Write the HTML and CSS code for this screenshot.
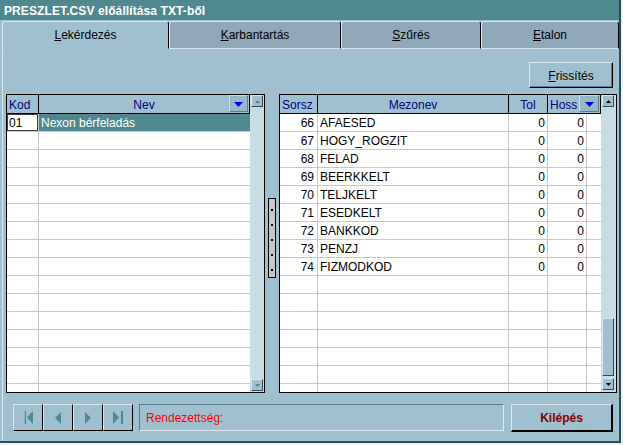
FILE: index.html
```html
<!DOCTYPE html>
<html>
<head>
<meta charset="utf-8">
<title>PRESZLET.CSV előállítása TXT-ből</title>
<link rel="stylesheet" href="styles.css">
</head>
<body>
<div class="window">
  <div class="titlebar">PRESZLET.CSV előállítása TXT-ből</div>
  <div class="tabs">
    <div class="tab active w1"><u>L</u>ekérdezés</div>
    <div class="tab w2"><u>K</u>arbantartás</div>
    <div class="tab w3"><u>S</u>zűrés</div>
    <div class="tab w4"><u>E</u>talon</div>
  </div>
  <div class="page">
    <div class="toprow">
      <div class="btn refresh"><u>F</u>rissítés</div>
    </div>
    <div class="grids">
      <div class="grid lgrid">
        <div class="gmain">
          <div class="ghead">
            <div class="hc l-kod">Kod</div>
            <div class="hc l-nev center">Nev<span class="sortbtn"><svg width="9" height="5" viewBox="0 0 9 5"><polygon points="0,0 9,0 4.5,5" fill="#0000ff"/></svg></span></div>
          </div>
          <div class="gbody">
            <div class="row sel"><div class="c l-kod cur">01</div><div class="c l-nev last">Nexon bérfeladás</div></div>
            <div class="row"><div class="c l-kod"></div><div class="c l-nev last"></div></div>
            <div class="row"><div class="c l-kod"></div><div class="c l-nev last"></div></div>
            <div class="row"><div class="c l-kod"></div><div class="c l-nev last"></div></div>
            <div class="row"><div class="c l-kod"></div><div class="c l-nev last"></div></div>
            <div class="row"><div class="c l-kod"></div><div class="c l-nev last"></div></div>
            <div class="row"><div class="c l-kod"></div><div class="c l-nev last"></div></div>
            <div class="row"><div class="c l-kod"></div><div class="c l-nev last"></div></div>
            <div class="row"><div class="c l-kod"></div><div class="c l-nev last"></div></div>
            <div class="row"><div class="c l-kod"></div><div class="c l-nev last"></div></div>
            <div class="row"><div class="c l-kod"></div><div class="c l-nev last"></div></div>
            <div class="row"><div class="c l-kod"></div><div class="c l-nev last"></div></div>
            <div class="row"><div class="c l-kod"></div><div class="c l-nev last"></div></div>
            <div class="row"><div class="c l-kod"></div><div class="c l-nev last"></div></div>
            <div class="row"><div class="c l-kod"></div><div class="c l-nev last"></div></div>
            <div class="row"><div class="c l-kod"></div><div class="c l-nev last"></div></div>
          </div>
        </div>
        <div class="vscroll">
          <div class="sbtn"><svg width="5" height="3" viewBox="0 0 5 3"><polygon points="2.5,0 5,3 0,3" fill="#5f8290"/></svg></div>
          <div class="track"></div>
          <div class="sbtn down l"><svg width="5" height="3" viewBox="0 0 5 3"><polygon points="0,0 5,0 2.5,3" fill="#5f8290"/></svg></div>
        </div>
      </div>

      <div class="splitter">
        <div class="grip"><i></i><i></i><i></i><i></i><i></i></div>
      </div>

      <div class="grid rgrid">
        <div class="gmain">
          <div class="ghead">
            <div class="hc r-sor">Sorsz</div>
            <div class="hc r-mez center">Mezonev</div>
            <div class="hc r-tol center">Tol</div>
            <div class="hc r-hossh">Hoss<span class="sortbtn wide"><svg width="9" height="5" viewBox="0 0 9 5"><polygon points="0,0 9,0 4.5,5" fill="#0000ff"/></svg></span></div>
          </div>
          <div class="gbody">
            <div class="row"><div class="c r-sor num">66</div><div class="c r-mez">AFAESED</div><div class="c r-tol num">0</div><div class="c r-hos num">0</div><div class="c r-fill"></div></div>
            <div class="row"><div class="c r-sor num">67</div><div class="c r-mez">HOGY_ROGZIT</div><div class="c r-tol num">0</div><div class="c r-hos num">0</div><div class="c r-fill"></div></div>
            <div class="row"><div class="c r-sor num">68</div><div class="c r-mez">FELAD</div><div class="c r-tol num">0</div><div class="c r-hos num">0</div><div class="c r-fill"></div></div>
            <div class="row"><div class="c r-sor num">69</div><div class="c r-mez">BEERKKELT</div><div class="c r-tol num">0</div><div class="c r-hos num">0</div><div class="c r-fill"></div></div>
            <div class="row"><div class="c r-sor num">70</div><div class="c r-mez">TELJKELT</div><div class="c r-tol num">0</div><div class="c r-hos num">0</div><div class="c r-fill"></div></div>
            <div class="row"><div class="c r-sor num">71</div><div class="c r-mez">ESEDKELT</div><div class="c r-tol num">0</div><div class="c r-hos num">0</div><div class="c r-fill"></div></div>
            <div class="row"><div class="c r-sor num">72</div><div class="c r-mez">BANKKOD</div><div class="c r-tol num">0</div><div class="c r-hos num">0</div><div class="c r-fill"></div></div>
            <div class="row"><div class="c r-sor num">73</div><div class="c r-mez">PENZJ</div><div class="c r-tol num">0</div><div class="c r-hos num">0</div><div class="c r-fill"></div></div>
            <div class="row"><div class="c r-sor num">74</div><div class="c r-mez">FIZMODKOD</div><div class="c r-tol num">0</div><div class="c r-hos num">0</div><div class="c r-fill"></div></div>
            <div class="row"><div class="c r-sor"></div><div class="c r-mez"></div><div class="c r-tol"></div><div class="c r-hos"></div><div class="c r-fill"></div></div>
            <div class="row"><div class="c r-sor"></div><div class="c r-mez"></div><div class="c r-tol"></div><div class="c r-hos"></div><div class="c r-fill"></div></div>
            <div class="row"><div class="c r-sor"></div><div class="c r-mez"></div><div class="c r-tol"></div><div class="c r-hos"></div><div class="c r-fill"></div></div>
            <div class="row"><div class="c r-sor"></div><div class="c r-mez"></div><div class="c r-tol"></div><div class="c r-hos"></div><div class="c r-fill"></div></div>
            <div class="row"><div class="c r-sor"></div><div class="c r-mez"></div><div class="c r-tol"></div><div class="c r-hos"></div><div class="c r-fill"></div></div>
            <div class="row"><div class="c r-sor"></div><div class="c r-mez"></div><div class="c r-tol"></div><div class="c r-hos"></div><div class="c r-fill"></div></div>
            <div class="row"><div class="c r-sor"></div><div class="c r-mez"></div><div class="c r-tol"></div><div class="c r-hos"></div><div class="c r-fill"></div></div>
          </div>
        </div>
        <div class="vscroll r">
          <div class="sbtn"><svg width="5" height="3" viewBox="0 0 5 3"><polygon points="2.5,0 5,3 0,3" fill="#000"/></svg></div>
          <div class="track"><div class="thumb"></div></div>
          <div class="sbtn down"><svg width="5" height="3" viewBox="0 0 5 3"><polygon points="0,0 5,0 2.5,3" fill="#000"/></svg></div>
        </div>
      </div>
    </div>

    <div class="bottomrow">
      <div class="nav">
        <div class="nbtn"><svg width="9" height="13" viewBox="0 0 9 13"><rect x="0" y="0" width="2" height="13" fill="#4f8a94"/><rect x="0" y="0" width="1" height="13" fill="#8fb6c0"/><polygon points="9,0 9,13 3,6.5" fill="#4f8a94"/></svg></div>
        <div class="nbtn"><svg width="6" height="12" viewBox="0 0 6 12"><polygon points="6,0 6,12 0,6" fill="#4f8a94"/></svg></div>
        <div class="nbtn"><svg width="6" height="12" viewBox="0 0 6 12"><polygon points="0,0 0,12 6,6" fill="#4f8a94"/></svg></div>
        <div class="nbtn"><svg width="10" height="13" viewBox="0 0 10 13"><polygon points="0,0 0,13 6,6.5" fill="#4f8a94"/><rect x="8" y="0" width="2" height="13" fill="#4f8a94"/></svg></div>
      </div>
      <div class="status">Rendezettség:</div>
      <div class="btn exit">Kilépés</div>
    </div>
  </div>
</div>
</body>
</html>
```
FILE: styles.css
```css
* { box-sizing: border-box; }
html, body { margin: 0; padding: 0; }
body {
  width: 623px;
  height: 445px;
  overflow: hidden;
  background: #eef3f5;
  font-family: "Liberation Sans", Arial, sans-serif;
  font-size: 12px;
  color: #000;
}
.window {
  width: 621px;
  height: 443px;
  background: #a0c0d0;
  border-right: 2px solid #2f4c55;
  border-bottom: 2px solid #2f4c55;
  display: flex;
  flex-direction: column;
}
.titlebar {
  height: 20px;
  flex: none;
  background: #508890;
  color: #fff;
  font-weight: bold;
  font-size: 12px;
  letter-spacing: 0.1px;
  padding: 2px 0 0 4px;
  line-height: 18px;
  white-space: nowrap;
}
.tabs {
  height: 29px;
  flex: none;
  display: flex;
  align-items: flex-end;
  padding-left: 2px;
}
.tab {
  height: 28px;
  display: flex;
  align-items: center;
  justify-content: center;
  background: #90a8b8;
  border-top: 1px solid #d8e8f0;
  border-left: 1px solid #d8e8f0;
  border-right: 1px solid #000;
  border-bottom: 1px solid #d8e8f0;
  border-radius: 3px 3px 0 0;
  white-space: nowrap;
}
.tab.active { background: #a0c0d0; border-bottom-color: #a0c0d0; }
.w1 { width: 167px; }
.w2 { width: 172px; }
.w3 { width: 140px; }
.w4 { width: 138px; }
u { text-decoration: underline; text-underline-offset: 1px; }

.page {
  flex: 1;
  margin-left: 2px;
  border-left: 1px solid #d8e8f0;
  padding: 13px 2px 0 3px;
  display: flex;
  flex-direction: column;
}
.toprow {
  height: 26px;
  flex: none;
  display: flex;
  justify-content: flex-end;
  padding-right: 4px;
}
.btn {
  display: flex;
  align-items: center;
  justify-content: center;
  background: #a0c0d0;
  border-top: 1px solid #d8e8f0;
  border-left: 1px solid #d8e8f0;
  border-right: 1px solid #000;
  border-bottom: 1px solid #000;
  box-shadow: inset -1px -1px 0 #5a7f8e;
  white-space: nowrap;
}
.refresh { width: 84px; height: 26px; padding-top: 1px; }
.exit {
  width: 102px;
  height: 28px;
  margin-left: 7px;
  border-right-width: 2px;
  border-bottom-width: 2px;
  box-shadow: none;
  color: #800000;
  font-weight: bold;
  padding-top: 1px;
}

.grids {
  display: flex;
  height: 299px;
  flex: none;
  margin-top: 6px;
}
.grid {
  border: 1px solid #000;
  display: flex;
  background: #fff;
  height: 299px;
  flex: none;
}
.lgrid { width: 259px; }
.rgrid { width: 338px; }
.gmain { display: flex; flex-direction: column; overflow: hidden; flex: none; }
.lgrid .gmain { width: 243px; }
.rgrid .gmain { width: 321px; }

.ghead {
  display: flex;
  height: 19px;
  flex: none;
  border-bottom: 1px solid #000;
  background: #a0c0d0;
}
.hc {
  border-right: 1px solid #000;
  color: #000080;
  line-height: 18px;
  padding: 1px 2px 0;
  position: relative;
  overflow: hidden;
  white-space: nowrap;
  flex: none;
}
.hc.center { text-align: center; }
.sortbtn {
  position: absolute;
  right: 1px;
  top: 0;
  width: 19px;
  height: 17px;
  background: #98b8c8;
  border-top: 1px solid #c8dce4;
  border-left: 1px solid #c8dce4;
  border-right: 1px solid #5a7f8e;
  border-bottom: 1px solid #5a7f8e;
  display: flex;
  align-items: center;
  justify-content: center;
  padding-top: 2px;
}
.sortbtn.wide { width: 20px; }

.gbody { display: flex; flex-direction: column; }
.row {
  display: flex;
  height: 18px;
  flex: none;
  border-bottom: 1px solid #c8c8c8;
}
.c {
  border-right: 1px solid #c8c8c8;
  line-height: 18px;
  padding: 0 2px;
  white-space: nowrap;
  overflow: hidden;
  flex: none;
}
.c.last { border-right: none; }
.c.num { text-align: right; padding-right: 2px; }
.r-sor.num { padding-right: 3px; }
.row.sel .l-nev { background: #508890; color: #fff; }
.c.cur { box-shadow: inset 0 0 0 1px #404040; }

.l-kod { width: 32px; }
.l-nev { width: 211px; }
.r-sor { width: 38px; }
.r-mez { width: 191px; }
.r-tol { width: 39px; }
.r-hos { width: 39px; }
.r-hossh { width: 53px; }
.r-fill { width: 14px; border-right: none; }

.vscroll {
  background: #c8dce4;
  display: flex;
  flex-direction: column;
  align-items: center;
  width: 14px;
  flex: none;
}
.vscroll.r { width: 15px; align-items: flex-start; padding-left: 1px; }
.sbtn {
  width: 12px;
  height: 12px;
  flex: none;
  background: #a0c0d0;
  border-top: 1px solid #d8e8f0;
  border-left: 1px solid #d8e8f0;
  border-right: 1px solid #304850;
  border-bottom: 1px solid #304850;
  display: flex;
  align-items: center;
  justify-content: center;
}
.sbtn svg { display: block; }
.sbtn.down { margin-bottom: 2px; }
.sbtn.down.l { margin-bottom: 1px; }
.track {
  flex: 1;
  width: 100%;
  display: flex;
  flex-direction: column;
  justify-content: flex-end;
}
.thumb {
  width: 12px;
  height: 58px;
  margin-bottom: 2px;
  background: #a0c0d0;
  border-top: 1px solid #d8e8f0;
  border-left: 1px solid #d8e8f0;
  border-right: 1px solid #304850;
  border-bottom: 1px solid #304850;
}

.splitter {
  width: 14px;
  flex: none;
  padding-left: 3px;
}
.grip {
  width: 8px;
  height: 80px;
  margin-top: 104px;
  border: 1px solid #000;
  background: #c4c8c8;
  display: flex;
  flex-direction: column;
  align-items: center;
  padding-top: 10px;
  gap: 13px;
}
.grip i { display: block; width: 2px; height: 2px; background: #000; }

.bottomrow {
  display: flex;
  align-items: flex-start;
  margin-top: 11px;
  padding: 0 4px 0 7px;
  height: 28px;
  flex: none;
}
.nav { display: flex; width: 120px; height: 27px; flex: none; }
.nbtn {
  width: 30px;
  height: 27px;
  background: #a0c0d0;
  border-top: 1px solid #d8e8f0;
  border-left: 1px solid #d8e8f0;
  border-right: 1px solid #000;
  border-bottom: 1px solid #000;
  display: flex;
  align-items: center;
  justify-content: center;
}
.nbtn svg { display: block; }
.status {
  width: 365px;
  height: 27px;
  margin-left: 6px;
  flex: none;
  border-top: 1px solid #4f8090;
  border-left: 1px solid #4f8090;
  border-right: 1px solid #d8e8f0;
  border-bottom: 1px solid #d8e8f0;
  color: #ff0000;
  padding-left: 6px;
  line-height: 25px;
  padding-top: 1px;
}
```
